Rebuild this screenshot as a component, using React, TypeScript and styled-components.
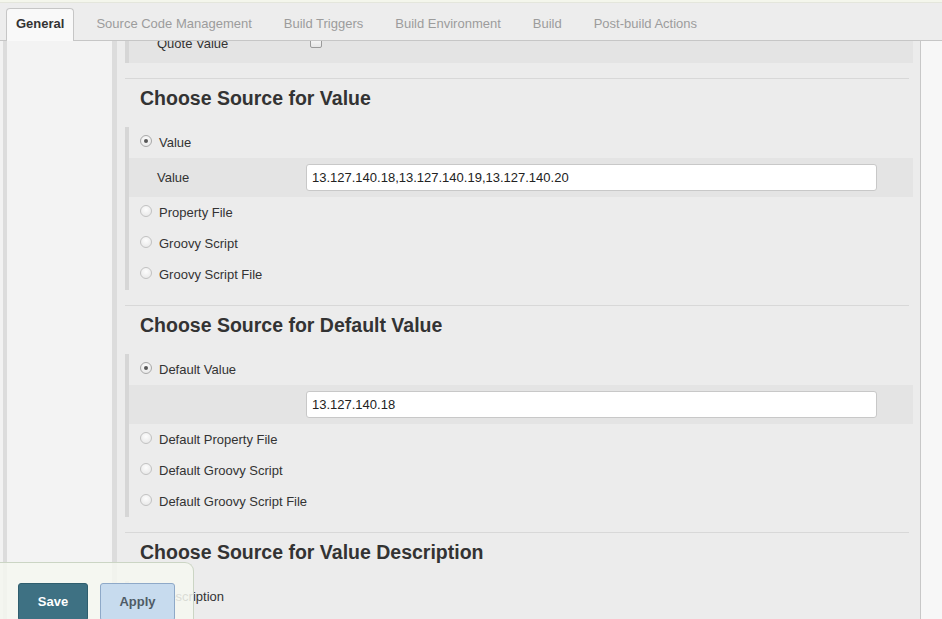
import React from "react";
import styled, { createGlobalStyle } from "styled-components";

const GlobalStyle = createGlobalStyle`
  html, body {
    margin: 0;
    padding: 0;
    background: #f2f2f2;
    font-family: "Liberation Sans", Arial, Helvetica, sans-serif;
    font-size: 13px;
    color: #333;
    overflow: hidden;
  }
  * { box-sizing: border-box; }
`;

const Page = styled.div`
  position: relative;
  width: 942px;
  height: 619px;
  display: flex;
  flex-direction: column;
  overflow: hidden;
`;

const TopStrip = styled.div`
  height: 3px;
  background: #f4f6ec;
  border-bottom: 1px solid #e4e6dc;
  flex: none;
`;

const TabBar = styled.div`
  height: 38px;
  flex: none;
  display: flex;
  align-items: flex-end;
  padding-left: 6px;
  background: #ededed;
  border-bottom: 1px solid #c6c6c6;
`;

const Tab = styled.div<{ $active?: boolean }>`
  height: ${(p) => (p.$active ? "33px" : "32px")};
  margin-bottom: ${(p) => (p.$active ? "-1px" : "0")};
  margin-right: ${(p) => (p.$active ? "6px" : "0")};
  padding: ${(p) => (p.$active ? "0 9px 2px" : "1px 16px 0")};
  line-height: 30px;
  font-size: 13px;
  white-space: nowrap;
  color: ${(p) => (p.$active ? "#333" : "#9c9c9c")};
  font-weight: ${(p) => (p.$active ? "bold" : "normal")};
  background: ${(p) => (p.$active ? "#f9f9f9" : "transparent")};
  border: ${(p) => (p.$active ? "1px solid #c6c6c6" : "none")};
  border-bottom: none;
  border-radius: 4px 4px 0 0;
`;

const Body = styled.div`
  flex: 1;
  min-height: 0;
  display: flex;
`;

const LeftRail = styled.div`
  width: 114px;
  margin-left: 3px;
  flex: none;
  background: #f3f3f3;
  border-left: 4px solid #dcdcdc;
  border-right: 5px solid #dcdcdc;
`;

const Content = styled.div`
  flex: 1;
  min-width: 0;
  overflow: hidden;
  background: #ececec;
  padding: 0 7px 0 8px;
  border-right: 1px solid #c8c8c8;
`;

const RightGutter = styled.div`
  width: 21px;
  flex: none;
  background: #f7f7f7;
`;

const Group = styled.div<{ $shift?: number }>`
  border-left: 4px solid #d6d6d6;
  margin-top: ${(p) => (p.$shift ? `${p.$shift}px` : "0")};
  margin-bottom: 15px;
`;

const Separator = styled.div`
  height: 1px;
  background: #d8d8d8;
  margin-right: 4px;
`;

const Heading = styled.h2`
  margin: 7px 0 17px 15px;
  font-size: 19.5px;
  line-height: 24px;
  font-weight: bold;
  color: #333;
`;

const RadioRow = styled.label`
  height: 31px;
  display: flex;
  align-items: center;
  gap: 7px;
  padding-left: 11px;
  color: #333;
  font-size: 13px;
`;

const RadioMark = styled.span<{ $checked?: boolean }>`
  width: 12px;
  height: 12px;
  flex: none;
  border-radius: 50%;
  border: 1px solid ${(p) => (p.$checked ? "#a9a9a9" : "#c2c2c2")};
  background: radial-gradient(circle at 50% 35%, #fdfdfd 0%, #e4e4e4 100%);
  display: flex;
  align-items: center;
  justify-content: center;
  margin-bottom: 3px;
  &::after {
    content: "";
    width: 4px;
    height: 4px;
    border-radius: 50%;
    background: #575757;
    display: ${(p) => (p.$checked ? "block" : "none")};
  }
`;

const FieldBand = styled.div`
  height: 39px;
  display: grid;
  grid-template-columns: 177px 1fr 36px;
  align-items: center;
  background: #e4e4e4;
`;

const FieldLabel = styled.span`
  padding-left: 28px;
  color: #333;
  font-size: 13px;
`;

const TextInput = styled.input`
  height: 27px;
  width: 100%;
  border: 1px solid #c8c8c8;
  border-radius: 3px;
  background: #fff;
  padding: 0 5px;
  font-family: "Liberation Sans", Arial, sans-serif;
  font-size: 13px;
  color: #222;
  outline: none;
`;

const CheckMark = styled.span`
  width: 12px;
  height: 12px;
  margin-left: 4px;
  margin-bottom: 3px;
  border: 1px solid #9a9a9a;
  border-radius: 2px;
  background: linear-gradient(#fdfdfd, #e6e6e6);
  display: block;
`;

const ActionBar = styled.div`
  position: absolute;
  left: 0;
  bottom: 0;
  width: 194px;
  height: 57px;
  padding: 20px 0 0 18px;
  display: flex;
  gap: 12px;
  align-items: flex-start;
  background: rgba(244, 247, 240, 0.86);
  border-top: 1px solid #cbd5c4;
  border-right: 1px solid #cbd5c4;
  border-top-right-radius: 9px;
`;

const Button = styled.button<{ $primary?: boolean }>`
  flex: none;
  height: 38px;
  width: ${(p) => (p.$primary ? "70px" : "75px")};
  padding: 0;
  line-height: 36px;
  font-family: "Liberation Sans", Arial, sans-serif;
  font-size: 13px;
  font-weight: bold;
  border-radius: 3px;
  color: ${(p) => (p.$primary ? "#ffffff" : "#4f5b67")};
  background: ${(p) => (p.$primary ? "#3e7183" : "#c7dbee")};
  border: 1px solid ${(p) => (p.$primary ? "#2f5e6e" : "#8ea9c8")};
`;

type Choice = { label: string; checked?: boolean; field?: { label: string; value: string } };

const sections: { title: string; choices: Choice[] }[] = [
  {
    title: "Choose Source for Value",
    choices: [
      { label: "Value", checked: true, field: { label: "Value", value: "13.127.140.18,13.127.140.19,13.127.140.20" } },
      { label: "Property File" },
      { label: "Groovy Script" },
      { label: "Groovy Script File" },
    ],
  },
  {
    title: "Choose Source for Default Value",
    choices: [
      { label: "Default Value", checked: true, field: { label: "", value: "13.127.140.18" } },
      { label: "Default Property File" },
      { label: "Default Groovy Script" },
      { label: "Default Groovy Script File" },
    ],
  },
  {
    title: "Choose Source for Value Description",
    choices: [{ label: "Description" }],
  },
];

const tabs = ["General", "Source Code Management", "Build Triggers", "Build Environment", "Build", "Post-build Actions"];

export default function App() {
  return (
    <>
      <GlobalStyle />
      <Page>
        <TopStrip />
        <TabBar>
          {tabs.map((t, i) => (
            <Tab key={t} $active={i === 0}>
              {t}
            </Tab>
          ))}
        </TabBar>
        <Body>
          <LeftRail />
          <Content>
            <Group $shift={-17}>
              <FieldBand>
                <FieldLabel>Quote Value</FieldLabel>
                <CheckMark />
              </FieldBand>
            </Group>
            {sections.map((s) => (
              <React.Fragment key={s.title}>
                <Separator />
                <Heading>{s.title}</Heading>
                <Group>
                  {s.choices.map((c) => (
                    <React.Fragment key={c.label}>
                      <RadioRow>
                        <RadioMark $checked={c.checked} />
                        {c.label}
                      </RadioRow>
                      {c.field && (
                        <FieldBand>
                          <FieldLabel>{c.field.label}</FieldLabel>
                          <TextInput defaultValue={c.field.value} readOnly />
                        </FieldBand>
                      )}
                    </React.Fragment>
                  ))}
                </Group>
              </React.Fragment>
            ))}
          </Content>
          <RightGutter />
        </Body>
        <ActionBar>
          <Button $primary>Save</Button>
          <Button>Apply</Button>
        </ActionBar>
      </Page>
    </>
  );
}
